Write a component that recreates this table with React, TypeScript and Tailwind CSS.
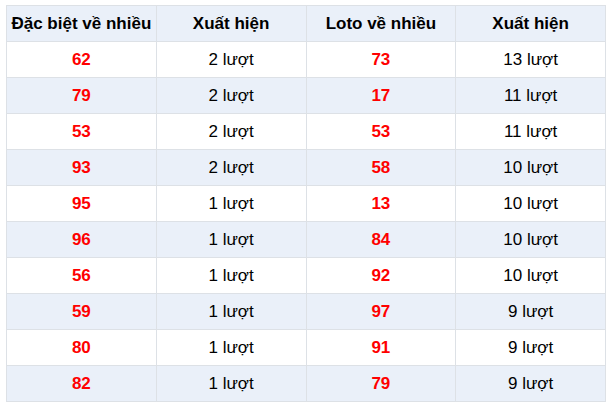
const rows: [string, string, string, string][] = [
  ["62", "2 lượt", "73", "13 lượt"],
  ["79", "2 lượt", "17", "11 lượt"],
  ["53", "2 lượt", "53", "11 lượt"],
  ["93", "2 lượt", "58", "10 lượt"],
  ["95", "1 lượt", "13", "10 lượt"],
  ["96", "1 lượt", "84", "10 lượt"],
  ["56", "1 lượt", "92", "10 lượt"],
  ["59", "1 lượt", "97", "9 lượt"],
  ["80", "1 lượt", "91", "9 lượt"],
  ["82", "1 lượt", "79", "9 lượt"],
]

export default function App() {
  return (
    <div className="bg-white w-[615px] h-[410px] pt-[5px] pl-[6px] font-['Liberation_Sans',Arial,sans-serif] text-[17px] text-black">
      <table className="border-collapse w-[600px] table-fixed">
        <thead>
          <tr className="bg-[#eaf0f9] h-[36px]">
            <th className="border border-[#dde1e6] font-bold text-center px-0">Đặc biệt về nhiều</th>
            <th className="border border-[#dde1e6] font-bold text-center">Xuất hiện</th>
            <th className="border border-[#dde1e6] font-bold text-center">Loto về nhiều</th>
            <th className="border border-[#dde1e6] font-bold text-center">Xuất hiện</th>
          </tr>
        </thead>
        <tbody>
          {rows.map((r, i) => (
            <tr key={i} className={i % 2 === 1 ? "bg-[#eaf0f9] h-[36px]" : "bg-white h-[36px]"}>
              <td className="border border-[#dde1e6] text-center font-bold text-[#ff0000]">{r[0]}</td>
              <td className="border border-[#dde1e6] text-center">{r[1]}</td>
              <td className="border border-[#dde1e6] text-center font-bold text-[#ff0000]">{r[2]}</td>
              <td className="border border-[#dde1e6] text-center">{r[3]}</td>
            </tr>
          ))}
        </tbody>
      </table>
    </div>
  )
}
